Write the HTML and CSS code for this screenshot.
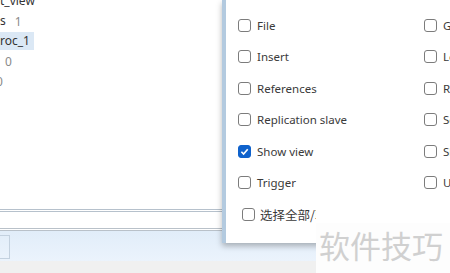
FILE: index.html
```html
<!doctype html>
<html lang="zh">
<head>
    <meta charset="UTF-8">
    <title>Privileges</title>
    <link rel="stylesheet" href="styles.css">
</head>
<body>
    <div class="app">
        <div class="tree">
            <ul class="tree-list">
                <li class="item"><span class="name">t_view</span></li>
                <li class="item"><span class="name">s</span><span class="count">1</span></li>
                <li class="item sel"><span class="name">roc_1</span></li>
                <li class="item"><span class="count in">0</span></li>
                <li class="item"><span class="count out">0</span></li>
            </ul>
        </div>
        <div class="input-row"></div>
        <div class="toolbar"><div class="tool-btn"></div></div>
        <div class="status"></div>
    </div>

    <div class="dialog">
        <div class="privs">
            <label class="opt"><span class="cb"></span></label>
            <label class="opt"><span class="cb"></span></label>

            <label class="opt"><span class="cb"></span>File</label>
            <label class="opt"><span class="cb"></span>Grant option</label>

            <label class="opt"><span class="cb"></span>Insert</label>
            <label class="opt"><span class="cb"></span>Lock tables</label>

            <label class="opt"><span class="cb"></span>References</label>
            <label class="opt"><span class="cb"></span>Reload</label>

            <label class="opt"><span class="cb"></span>Replication slave</label>
            <label class="opt"><span class="cb"></span>Select</label>

            <label class="opt"><span class="cb on"><svg viewBox="0 0 12 12"><path d="M2.6 6.3 L5 8.7 L9.5 3.5" /></svg></span>Show view</label>
            <label class="opt"><span class="cb"></span>Shutdown</label>

            <label class="opt"><span class="cb"></span>Trigger</label>
            <label class="opt"><span class="cb"></span>Update</label>

            <label class="opt all"><span class="cb"></span><span class="all-text">选择全部/取消全部</span></label>
        </div>
    </div>

    <div class="watermark">软件技巧</div>
</body>
</html>
```

FILE: styles.css
```css
*{
    margin: 0;
    padding: 0;
    list-style: none;
    box-sizing: border-box;
}
html,body{
    width: 450px;
    height: 273px;
    overflow: hidden;
    background: #fff;
    font-family: "Noto Sans", "Noto Sans CJK SC", sans-serif;
}
.app{
    display: flex;
    flex-direction: column;
    height: 273px;
}
.tree{
    height: 209px;
    overflow: hidden;
    font-size: 12px;
    color: #333;
}
.tree-list{
    margin-top: -9px;
}
.item{
    height: 20px;
    display: flex;
    align-items: center;
}
.item .name{
    line-height: 18px;
    padding-right: 4px;
}
.item.sel .name{
    background: #dbe8f5;
}
.count{
    color: #8a8a8a;
    margin-left: 5px;
}
.count.in{
    margin-left: 5px;
}
.count.out{
    margin-left: -4px;
}
.input-row{
    height: 22px;
    border-top: 3px double #b6c1cc;
    border-bottom: 3px double #b9c1c9;
}
.toolbar{
    height: 30px;
    background: linear-gradient(#e1edf9, #ebf3fc);
    padding-top: 4px;
}
.tool-btn{
    width: 30px;
    height: 24px;
    margin-left: -20px;
    border: 1px solid #c3d1df;
}
.status{
    flex: 1;
    background: #f0f0f0;
}

/* privileges dialog over the main window */
.dialog{
    position: absolute;
    left: 222px;
    top: 0;
    width: 240px;
    height: 243px;
    background: #fff;
    border-left: 4px solid #b3cadf;
    box-shadow: 0 3px 6px rgba(0,0,0,.28);
    overflow: hidden;
    padding-left: 12px;
}
.privs{
    margin-top: -22px;
    display: grid;
    grid-template-columns: 186px 186px;
    grid-auto-rows: 31.5px;
    font-size: 11.5px;
    color: #3a3a3a;
}
.opt{
    display: flex;
    align-items: center;
    white-space: nowrap;
}
.cb{
    width: 13px;
    height: 13px;
    border: 1px solid #7c7c7c;
    border-radius: 3px;
    background: #fff;
    margin-right: 6px;
    flex-shrink: 0;
    display: flex;
}
.cb.on{
    background: #0f62cc;
    border-color: #0f62cc;
}
.cb svg{
    width: 11px;
    height: 11px;
}
.cb svg path{
    fill: none;
    stroke: #fff;
    stroke-width: 1.8;
}
.opt.all{
    grid-column: 1 / 2;
    padding-left: 4px;
}
.all-text{
    font-size: 12.5px;
    font-family: "Noto Sans CJK SC", sans-serif;
    width: 56px;
    overflow: hidden;
    margin-left: -1px;
}

.watermark{
    position: absolute;
    left: 316px;
    top: 223px;
    width: 134px;
    height: 50px;
    background: #fdfdfd;
    color: #d0d0d0;
    font-family: "Noto Sans CJK SC", sans-serif;
    font-size: 31px;
    line-height: 44px;
    padding-left: 3px;
    white-space: nowrap;
}
```
